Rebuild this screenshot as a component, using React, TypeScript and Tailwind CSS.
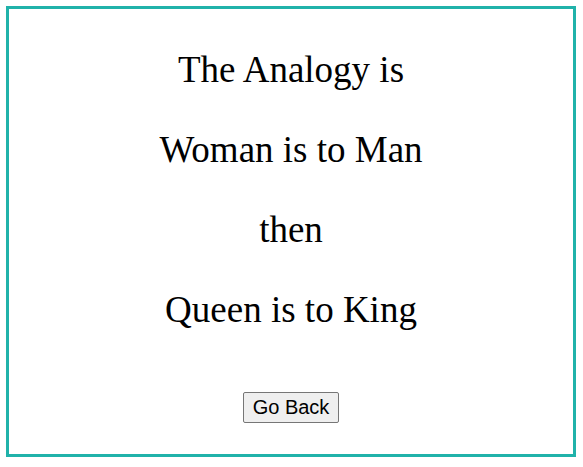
export default function App() {
  const lines = ["The Analogy is", "Woman is to Man", "then", "Queen is to King"];
  return (
    <div className="m-[6px] h-[451px] w-[570px] border-[3px] border-[#20b2aa] bg-white">
      <div className="flex flex-col items-center pt-[41px] font-['Liberation_Serif',serif] text-[37px] leading-[40px] text-black">
        {lines.map((l) => (
          <div key={l} className="mb-[40px]">
            {l}
          </div>
        ))}
        <button className="mt-[22px] rounded-[2px] border border-[#767676] bg-[#efefef] px-[9px] py-[2px] font-['Liberation_Sans',sans-serif] text-[20px] leading-[25px]">
          Go Back
        </button>
      </div>
    </div>
  );
}
